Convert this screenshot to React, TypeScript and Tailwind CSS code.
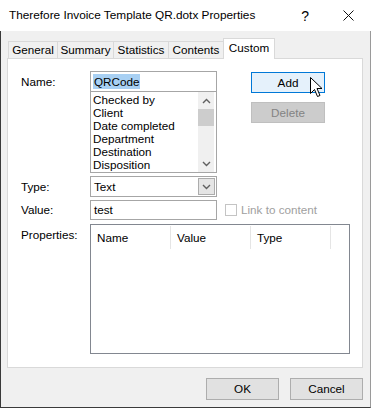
const font = "font-['Liberation_Sans',Arial,sans-serif]";

const tabs = [
  { label: "General", w: "w-[49px]" },
  { label: "Summary", w: "w-[56px]" },
  { label: "Statistics", w: "w-[55px]" },
  { label: "Contents", w: "w-[55px]" },
];

const items = ["Checked by", "Client", "Date completed", "Department", "Destination", "Disposition"];

function Cursor() {
  return (
    <svg className="absolute left-[59px] top-[6px]" width="13" height="21" viewBox="0 0 13 21">
      <path d="M0.5 0.5 L0.5 16.5 L4.5 12.5 L7.5 19.5 L10 18.5 L7 11.5 L12 11.5 Z" fill="white" stroke="black" strokeWidth="1" strokeLinejoin="miter" />
    </svg>
  );
}

function Chevron({ up = false, className = "" }: { up?: boolean; className?: string }) {
  return (
    <svg width="9" height="6" viewBox="0 0 9 6" className={className}>
      <path d={up ? "M1 5 L4.5 1.5 L8 5" : "M1 1 L4.5 4.5 L8 1"} fill="none" stroke="#606060" strokeWidth="1.4" />
    </svg>
  );
}

export default function App() {
  return (
    <div className={`flex h-[408px] w-[371px] flex-col bg-white text-[11.7px] leading-none text-black ${font}`}>
      {/* title bar */}
      <div className="flex h-[31px] shrink-0 items-center pl-[9px]">
        <span className="text-[11.8px]">Therefore Invoice Template QR.dotx Properties</span>
        <span className="ml-auto mr-[34px] text-[14px]">?</span>
        <svg className="mr-[17px]" width="11" height="11" viewBox="0 0 11 11">
          <path d="M0.5 0.5 L10.5 10.5 M10.5 0.5 L0.5 10.5" stroke="#111" strokeWidth="1" />
        </svg>
      </div>

      {/* body */}
      <div className="flex flex-1 flex-col border-b border-l border-r border-b-[#3a3a3a] border-l-[#3a3a3a] border-r-[#9a9a9a] bg-[#f0f0f0]">
        <div className="mt-[7px] flex h-[20px] items-end pl-[7px]">
          {tabs.map((t) => (
            <div key={t.label} className={`flex h-[17px] items-center justify-center border-l border-t border-[#d9d9d9] ${t.w}`}>
              {t.label}
            </div>
          ))}
          <div className="relative z-10 mb-[-1px] flex h-[21px] w-[52px] items-center justify-center border-l border-r border-t border-[#d9d9d9] bg-white pb-[2px]">
            Custom
          </div>
        </div>

        <div className="ml-[6px] h-[310px] w-[356px] border border-[#d9d9d9] bg-white pl-[13px] pt-[12px]">
          {/* name row */}
          <div className="flex">
            <div className="flex h-[21px] w-[69px] items-center">Name:</div>
            <div className="flex w-[127px] flex-col">
              <div className="flex h-[21px] items-center border border-[#a6a6a6] pl-[2px]">
                <span className="bg-[#a8d0f3] px-[1px] py-[2px]">QRCode</span>
              </div>
              <div className="flex h-[81px] border border-t-0 border-[#a6a6a6]">
                <div className="flex flex-1 flex-col pl-[2px] pt-[1px]">
                  {items.map((i) => (
                    <div key={i} className="flex h-[13px] items-center">{i}</div>
                  ))}
                </div>
                <div className="mr-[2px] flex w-[16px] flex-col items-center bg-[#f0f0f0]">
                  <div className="flex h-[17px] w-full items-center justify-center">
                    <Chevron up />
                  </div>
                  <div className="h-[17px] w-full bg-[#cdcdcd]" />
                  <div className="flex-1" />
                  <div className="flex h-[17px] w-full items-center justify-center">
                    <Chevron />
                  </div>
                </div>
              </div>
            </div>
            <div className="relative ml-[34px] flex flex-col gap-[9px] pt-[1px]">
              <div className="flex h-[21px] w-[74px] items-center justify-center border border-[#0078d7] bg-[#e5f1fb]">Add</div>
              <div className="flex h-[21px] w-[74px] items-center justify-center border border-[#bfbfbf] bg-[#cccccc] text-[#838383]">Delete</div>
              <Cursor />
            </div>
          </div>

          {/* type row */}
          <div className="mt-[3px] flex">
            <div className="flex h-[21px] w-[69px] items-center">Type:</div>
            <div className="flex h-[21px] w-[127px] items-center border border-[#a6a6a6] pl-[3px]">
              <span className="flex-1">Text</span>
              <div className="mr-[1px] flex h-[17px] w-[17px] items-center justify-center border border-[#acacac] bg-[#e5e5e5]">
                <Chevron />
              </div>
            </div>
          </div>

          {/* value row */}
          <div className="mt-[3px] flex items-center">
            <div className="flex h-[20px] w-[69px] items-center">Value:</div>
            <div className="flex h-[20px] w-[127px] items-center border border-[#a6a6a6] pl-[3px]">test</div>
            <div className="ml-[8px] h-[12px] w-[12px] border border-[#c4c4c4] bg-white" />
            <span className="ml-[4px] text-[#a0a0a0]">Link to content</span>
          </div>

          {/* properties row */}
          <div className="mt-[4px] flex">
            <div className="w-[69px] pt-[5px]">Properties:</div>
            <div className="h-[130px] w-[260px] border border-[#828790] bg-white">
              <div className="flex h-[24px] items-center pt-[1px]">
                {["Name", "Value", "Type"].map((h) => (
                  <div key={h} className="flex h-[23px] w-[80px] items-center border-r border-[#e5e5e5] pl-[6px]">{h}</div>
                ))}
              </div>
            </div>
          </div>
        </div>

        {/* footer */}
        <div className="mt-[10px] flex justify-end gap-[11px] pr-[7px]">
          <div className="flex h-[22px] w-[73px] items-center justify-center border border-[#adadad] bg-[#e1e1e1]">OK</div>
          <div className="flex h-[22px] w-[73px] items-center justify-center border border-[#adadad] bg-[#e1e1e1]">Cancel</div>
        </div>
      </div>
    </div>
  );
}
